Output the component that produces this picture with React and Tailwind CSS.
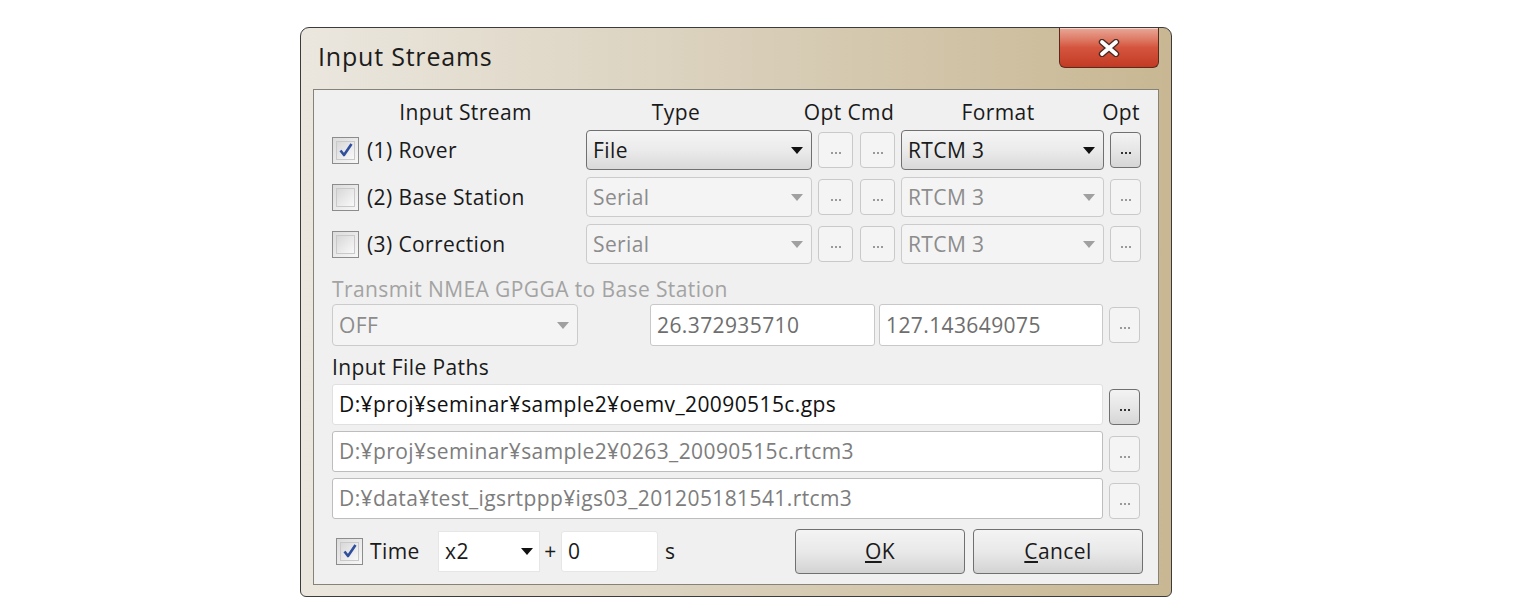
import React from 'react';

function CloseGlyph() {
  return (
    <svg aria-hidden="true" width="24" height="18" viewBox="0 0 24 18">
      <path d="M5 3 L19 15 M19 3 L5 15" stroke="#4a2a22" strokeWidth="6.4" strokeLinecap="round" />
      <path d="M5 3 L19 15 M19 3 L5 15" stroke="#ffffff" strokeWidth="3.8" strokeLinecap="round" />
    </svg>
  );
}

function Check({ checked, className = '' }) {
  return (
    <span
      className={`flex size-[27px] shrink-0 items-center justify-center border border-[#8c8c8c] bg-gradient-to-br from-[#dcdcdc] to-[#f7f7f7] p-[3px] ${className}`}
    >
      <span className="flex size-full items-center justify-center border border-[#c9c9c9] bg-gradient-to-br from-[#d8d8d8] to-[#f9f9f9]">
        {checked && (
          <svg aria-hidden="true" width="16" height="16" viewBox="0 0 16 16">
            <path d="M2.5 8.5 L6 13 L13.5 2" fill="none" stroke="#2f4f9e" strokeWidth="2.6" strokeLinejoin="round" />
          </svg>
        )}
      </span>
    </span>
  );
}

function Dots({ enabled, className = '' }) {
  return (
    <span
      className={`flex shrink-0 items-center justify-center rounded-[4px] border ${
        enabled
          ? 'border-[#707070] bg-gradient-to-b from-[#f3f3f3] via-[#e6e6e6] to-[#d6d6d6]'
          : 'border-[#c9c9c9] bg-[#f4f4f4]'
      } ${className}`}
    >
      <span className="flex gap-[2px] pt-[6px]">
        {[0, 1, 2].map((i) => (
          <span key={i} className={`size-[2px] ${enabled ? 'bg-[#333]' : 'bg-[#9a9a9a]'}`} />
        ))}
      </span>
    </span>
  );
}

function Combo({ value, enabled, className = '' }) {
  return (
    <span
      className={`flex shrink-0 items-center justify-between rounded-[4px] border pl-[6px] pr-[8px] ${
        enabled
          ? 'border-[#707070] bg-gradient-to-b from-[#f4f4f4] via-[#ebebeb] to-[#d9d9d9] text-[#1a1a1a]'
          : 'border-[#cbcbcb] bg-[#f4f4f4] text-[#8c8c8c]'
      } ${className}`}
    >
      <span>{value}</span>
      <span
        className={`h-0 w-0 border-x-[6px] border-t-[7px] border-x-transparent ${
          enabled ? 'border-t-[#111]' : 'border-t-[#a0a0a0]'
        }`}
      />
    </span>
  );
}

function Field({ value, className = '', tone = 'text-[#1a1a1a]', border = 'border-[#d4d4d4]' }) {
  return (
    <span className={`flex shrink-0 items-center rounded-[3px] border bg-white pl-[6px] ${border} ${tone} ${className}`}>
      {value}
    </span>
  );
}

const streams = [
  { label: '(1) Rover', on: true, type: 'File' },
  { label: '(2) Base Station', on: false, type: 'Serial' },
  { label: '(3) Correction', on: false, type: 'Serial' },
];

const paths = [
  { value: 'D:¥proj¥seminar¥sample2¥oemv_20090515c.gps', active: true },
  { value: 'D:¥proj¥seminar¥sample2¥0263_20090515c.rtcm3', active: false },
  { value: 'D:¥data¥test_igsrtppp¥igs03_201205181541.rtcm3', active: false },
];

export default function App() {
  return (
    <main className="min-h-[613px] w-full bg-white pl-[300px] pt-[27px] font-['Open_Sans',sans-serif] text-[21px] leading-none tracking-[0.4px] text-[#1a1a1a]">
      <div className="flex h-[570px] w-[872px] flex-col rounded-t-[9px] rounded-b-[6px] border border-[#3b3b3b] bg-gradient-to-r from-[#ebe7df] via-[#d9cfba] to-[#c8b792]">
        <div className="flex h-[61px] shrink-0 items-start justify-between pl-[17px] pr-[12px]">
          <span className="mt-[16px] text-[25px] tracking-[0.8px] text-[#1c1c1c]">Input Streams</span>
          <span className="flex h-[40px] w-[100px] items-center justify-center rounded-b-[6px] border border-t-0 border-[#5a2a20] bg-gradient-to-b from-[#e8a898] via-[#d4553f] to-[#c33a22] shadow-[inset_0_1px_0_rgba(255,255,255,0.5)]">
            <CloseGlyph />
          </span>
        </div>

        <div className="mx-[12px] flex h-[496px] flex-col border border-[#85827a] bg-[#f0f0f0] pl-[18px] pr-[15px]">
          <div className="mt-[10px] flex h-[24px] items-center">
            <span className="w-[267px] text-center">Input Stream</span>
            <span className="w-[154px] text-center">Type</span>
            <span className="w-[192px] text-center">Opt Cmd</span>
            <span className="w-[106px] text-center">Format</span>
            <span className="w-[89px] text-right">Opt</span>
          </div>

          {streams.map((s, i) => (
            <div key={s.label} className={`flex h-[40px] items-center ${i === 0 ? 'mt-[6px]' : 'mt-[7px]'}`}>
              <span className="flex w-[254px] items-center">
                <Check checked={s.on} />
                <span className="ml-[8px]">{s.label}</span>
              </span>
              <Combo value={s.type} enabled={s.on} className="h-full w-[226px]" />
              <Dots className="ml-[6px] h-[36px] w-[35px]" />
              <Dots className="ml-[7px] h-[36px] w-[35px]" />
              <Combo value="RTCM 3" enabled={s.on} className="ml-[6px] h-full w-[203px]" />
              <Dots enabled={s.on} className="ml-[6px] h-[36px] w-[31px]" />
            </div>
          ))}

          <div className="mt-[15px] h-[20px] text-[#a3a3a3]">Transmit NMEA GPGGA to Base Station</div>
          <div className="mt-[5px] flex h-[42px] items-center">
            <Combo value="OFF" className="h-full w-[246px]" />
            <Field
              value="26.372935710"
              tone="text-[#6e6e6e]"
              border="border-[#c8c8c8]"
              className="ml-[72px] h-full w-[225px]"
            />
            <Field
              value="127.143649075"
              tone="text-[#6e6e6e]"
              border="border-[#c8c8c8]"
              className="ml-[4px] h-full w-[224px]"
            />
            <Dots className="ml-[6px] h-[36px] w-[31px]" />
          </div>

          <div className="mt-[10px] flex h-[22px] items-center">Input File Paths</div>
          {paths.map((p) => (
            <div key={p.value} className="mt-[6px] flex h-[41px] items-center">
              <Field
                value={p.value}
                tone={p.active ? 'text-[#111]' : 'text-[#7d7d7d]'}
                border={p.active ? 'border-[#e0e0e0]' : 'border-[#bdbdbd]'}
                className="h-full w-[771px]"
              />
              <Dots enabled={p.active} className="ml-[6px] h-[36px] w-[31px] self-end" />
            </div>
          ))}

          <div className="mt-[9px] flex h-[46px] items-center">
            <Check checked className="ml-[4px]" />
            <span className="ml-[7px] w-[68px]">Time</span>
            <span className="flex h-[41px] w-[102px] items-center justify-between border border-[#e6e6e6] bg-white pl-[6px] pr-[6px]">
              <span>x2</span>
              <span className="h-0 w-0 border-x-[6px] border-t-[7px] border-x-transparent border-t-[#111]" />
            </span>
            <span className="w-[21px] text-center">+</span>
            <Field value="0" border="border-[#e6e6e6]" className="h-[41px] w-[97px]" />
            <span className="ml-[7px]">s</span>
            <span className="ml-auto flex h-[45px] w-[170px] items-center justify-center rounded-[4px] border border-[#707070] bg-gradient-to-b from-[#f4f4f4] via-[#e9e9e9] to-[#d3d3d3]">
              <span>
                <span className="underline underline-offset-2">O</span>K
              </span>
            </span>
            <span className="ml-[8px] flex h-[45px] w-[170px] items-center justify-center rounded-[4px] border border-[#707070] bg-gradient-to-b from-[#f4f4f4] via-[#e9e9e9] to-[#d3d3d3]">
              <span>
                <span className="underline underline-offset-2">C</span>ancel
              </span>
            </span>
          </div>
        </div>
      </div>
    </main>
  );
}
